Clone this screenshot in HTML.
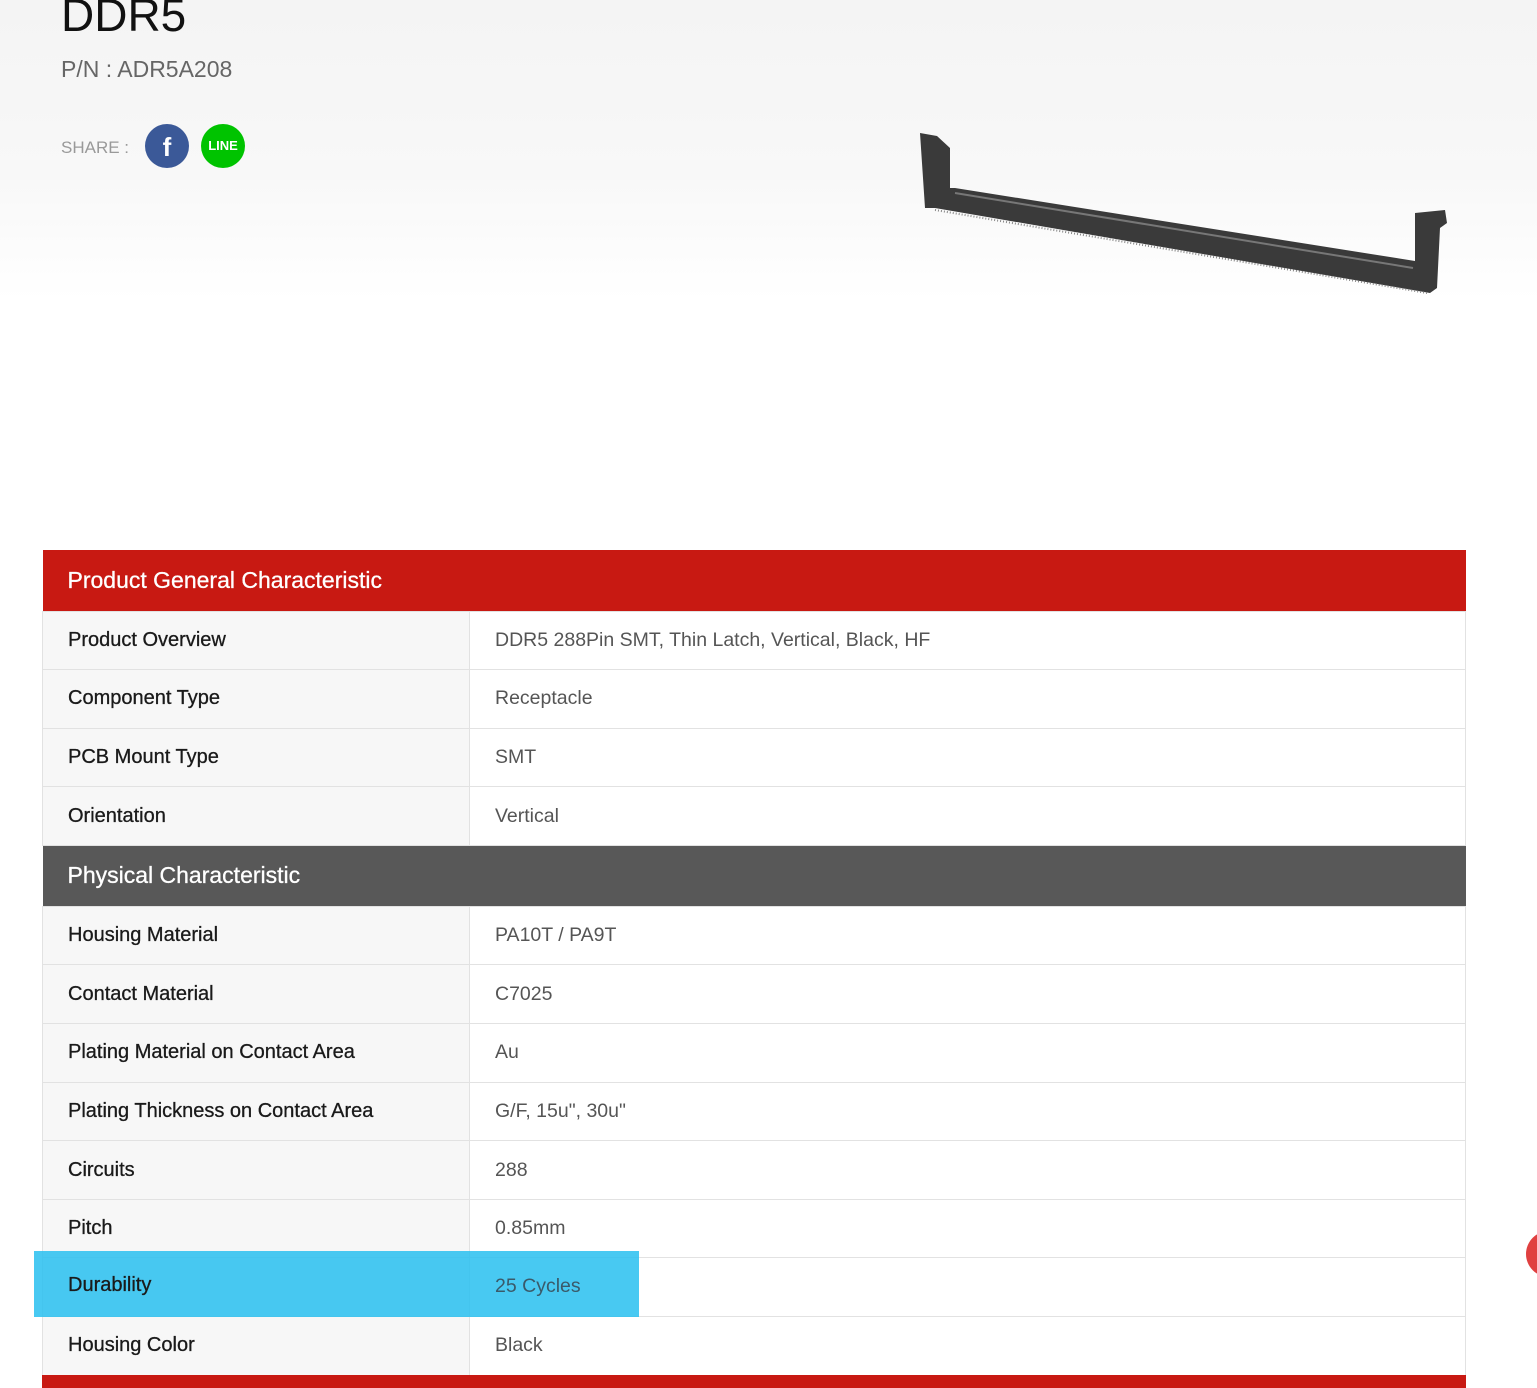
<!DOCTYPE html>
<html><head><meta charset="utf-8"><style>
*{margin:0;padding:0;box-sizing:border-box}
body{width:1537px;height:1388px;overflow:hidden;position:relative;font-family:"Liberation Sans",sans-serif;background:#fff}
.top{position:absolute;left:0;top:0;width:1537px;height:300px;background:linear-gradient(#f4f4f4,#f8f8f8 60%,#fff)}
.t1{position:absolute;left:61px;top:-12px;font-size:46px;color:#111}
.pn{position:absolute;left:61px;top:56px;font-size:23px;color:#666}
.sh{position:absolute;left:61px;top:138px;font-size:17px;color:#999}
.c{position:absolute;top:124px;width:44px;height:44px;border-radius:50%;color:#fff;text-align:center}
table{position:absolute;left:42px;top:550px;width:1424px;border-collapse:collapse}
td{height:58.6px;border:1px solid #e2e2e2;font-size:20px}
td.l{width:427px;background:#f7f7f7;color:#1a1a1a;padding-left:25px;-webkit-text-stroke:0.3px #1a1a1a}
td.v{color:#555;padding-left:25px;font-size:19.5px}
tr.h td{height:61px;color:#fff;font-size:23px;padding-left:25px;border:none;-webkit-text-stroke:0.3px #fff}
</style></head><body>
<div class="top"></div>
<div class="t1">DDR5</div>
<div class="pn">P/N : ADR5A208</div>
<div class="sh">SHARE :</div>
<div class="c" style="left:145px;background:#3b5998;font-size:26px;font-weight:bold;line-height:46px">f</div>
<div class="c" style="left:201px;background:#00c300;font-size:13px;font-weight:bold;line-height:44px">LINE</div>
<svg style="position:absolute;left:915px;top:128px" width="540" height="175" viewBox="0 0 540 175">
<polygon points="5,5 22,8 35,20 35,60 40,60 500,133 500,85 530,82 532,95 525,100 522,160 515,165 20,80 10,80" fill="#3a3a3a"/>
<line x1="40" y1="65" x2="498" y2="140" stroke="#777" stroke-width="2"/>
<line x1="20" y1="82" x2="512" y2="165" stroke="#888" stroke-width="2" stroke-dasharray="1 2"/>
</svg>
<table>
<tr class="h" style="background:#c81912"><td colspan="2">Product General Characteristic</td></tr>
<tr><td class="l">Product Overview</td><td class="v">DDR5 288Pin SMT, Thin Latch, Vertical, Black, HF</td></tr>
<tr><td class="l">Component Type</td><td class="v">Receptacle</td></tr>
<tr><td class="l">PCB Mount Type</td><td class="v">SMT</td></tr>
<tr><td class="l">Orientation</td><td class="v">Vertical</td></tr>
<tr class="h" style="background:#585858"><td colspan="2">Physical Characteristic</td></tr>
<tr><td class="l">Housing Material</td><td class="v">PA10T / PA9T</td></tr>
<tr><td class="l">Contact Material</td><td class="v">C7025</td></tr>
<tr><td class="l">Plating Material on Contact Area</td><td class="v">Au</td></tr>
<tr><td class="l">Plating Thickness on Contact Area</td><td class="v">G/F, 15u", 30u"</td></tr>
<tr><td class="l">Circuits</td><td class="v">288</td></tr>
<tr><td class="l">Pitch</td><td class="v">0.85mm</td></tr>
<tr><td class="l"></td><td class="v"></td></tr>
<tr><td class="l">Housing Color</td><td class="v">Black</td></tr>
</table>
<div style="position:absolute;left:34px;top:1251px;width:605px;height:66px;background:rgba(40,192,240,0.85)"></div>
<div style="position:absolute;left:68px;top:1274px;font-size:20px;color:#1a1a1a;-webkit-text-stroke:0.3px #1a1a1a">Durability</div>
<div style="position:absolute;left:495px;top:1275px;font-size:19.5px;color:#3a5a6a">25 Cycles</div>
<div style="position:absolute;left:42px;top:1375px;width:1424px;height:13px;background:#c81912"></div>
<div style="position:absolute;left:1526px;top:1231px;width:46px;height:46px;border-radius:50%;background:#e04040"></div>
</body></html>
